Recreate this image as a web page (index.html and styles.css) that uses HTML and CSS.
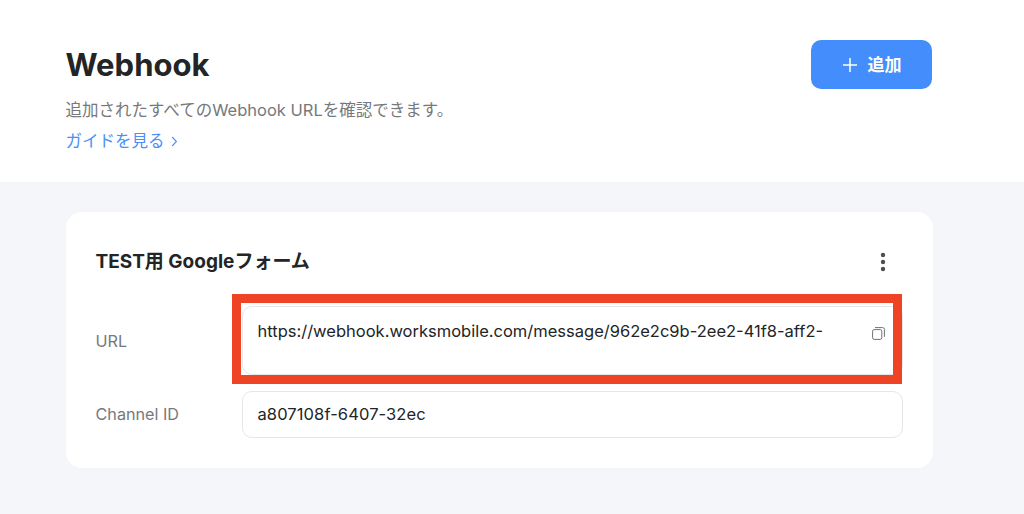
FILE: index.html
```html
<!DOCTYPE html>
<html lang="ja">
<head>
<meta charset="utf-8">
<title>Webhook</title>
<link rel="stylesheet" href="styles.css">
</head>
<body>
<header class="head">
  <div class="head-text">
    <h1 class="title">Webhook</h1>
    <p class="desc">追加されたすべてのWebhook URLを確認できます。</p>
    <a class="guide">ガイドを見る
      <svg class="chev" width="7" height="11" viewBox="0 0 7 11"><path d="M1.2 1l4.2 4.5L1.2 10" fill="none" stroke="#4a8ff7" stroke-width="1.1"/></svg>
    </a>
  </div>
  <button class="add">
    <svg width="16" height="16" viewBox="0 0 16 16"><path d="M8 1v14M1 8h14" stroke="#fff" stroke-width="1.5" fill="none"/></svg>
    <span>追加</span>
  </button>
</header>
<main class="main">
  <section class="card">
    <div class="card-head">
      <h2 class="card-title">TEST用 Googleフォーム</h2>
      <svg class="more" width="6" height="20" viewBox="0 0 6 20"><circle cx="3" cy="3" r="2.2"/><circle cx="3" cy="10" r="2.2"/><circle cx="3" cy="17" r="2.2"/></svg>
    </div>
    <div class="row row-url">
      <div class="label">URL</div>
      <div class="field field-url">
        <span>https://webhook.worksmobile.com/message/962e2c9b-2ee2-41f8-aff2-</span>
        <svg class="copy" width="13" height="13" viewBox="0 0 13 13"><rect x="0.6" y="2.6" width="9.2" height="9.8" rx="1.6" fill="none" stroke="#6f7275"/><path d="M3 .6h7.6a1.8 1.8 0 0 1 1.8 1.8v7.4" fill="none" stroke="#6f7275"/></svg>
        <div class="highlight"></div>
      </div>
    </div>
    <div class="row row-id">
      <div class="label">Channel ID</div>
      <div class="field field-id">a807108f-6407-32ec</div>
    </div>
  </section>
</main>
</body>
</html>
```

FILE: styles.css
```css
* { box-sizing: border-box; }
html, body { margin: 0; height: 100%; }
body {
  width: 1024px;
  height: 514px;
  overflow: hidden;
  background: #f4f6fa;
  font-family: Inter, "Noto Sans CJK JP", sans-serif;
  color: #222426;
  display: flex;
  flex-direction: column;
}
.head {
  height: 182px;
  background: #fff;
  padding: 40px 92px 0 65.5px;
  display: flex;
  justify-content: space-between;
  align-items: flex-start;
}
.title {
  margin: 5px 0 0;
  font-size: 31px;
  line-height: 40px;
  font-weight: 700;
  letter-spacing: 0;
}
.desc {
  margin: 13px 0 0;
  font-size: 16.5px;
  line-height: 25px;
  color: #76797c;
}
.guide {
  margin-top: 6px;
  display: flex;
  align-items: center;
  gap: 6px;
  font-size: 16.5px;
  line-height: 25px;
  color: #4a8ff7;
}
.add {
  width: 121px;
  height: 49px;
  border: 0;
  border-radius: 10px;
  background: #438efc;
  color: #fff;
  font: 700 17px/24px Inter, "Noto Sans CJK JP", sans-serif;
  display: flex;
  align-items: center;
  justify-content: center;
  gap: 10px;
}
.main { padding: 30px 91px 0 66px; }
.card {
  height: 256px;
  background: #fff;
  border-radius: 16px;
  padding: 0 30px 0 29.5px;
}
.card-head {
  height: 94px;
  padding-top: 36px;
  display: flex;
  justify-content: space-between;
  align-items: flex-start;
}
.card-title {
  margin: 0;
  font-size: 19px;
  line-height: 28px;
  font-weight: 700;
}
.more { fill: #4b4e52; margin: 4px 17px 0 0; }
.row { display: flex; align-items: center; }
.label {
  width: 146.5px;
  font-size: 16.2px;
  color: #76797c;
}
.row-id .label { margin-top: -1px; }
.field {
  position: relative;
  width: 661px;
  border: 1px solid #e4e6ea;
  border-radius: 10px;
  padding-left: 14.5px;
  font-size: 16.5px;
  line-height: 24px;
  color: #222426;
  background: #fff;
}
.field-url {
  height: 69px;
  padding-top: 12px;
  display: flex;
  justify-content: space-between;
  align-items: flex-start;
}
.copy { margin: 8px 17px 0 0; }
.highlight {
  position: absolute;
  left: -11px;
  top: -13px;
  width: 670px;
  height: 90px;
  border: 9px solid #ee4325;
}
.row-id { margin-top: 16px; }
.field-id {
  height: 47px;
  padding-bottom: 1px;
  display: flex;
  align-items: center;
  letter-spacing: 0.1px;
}
```
